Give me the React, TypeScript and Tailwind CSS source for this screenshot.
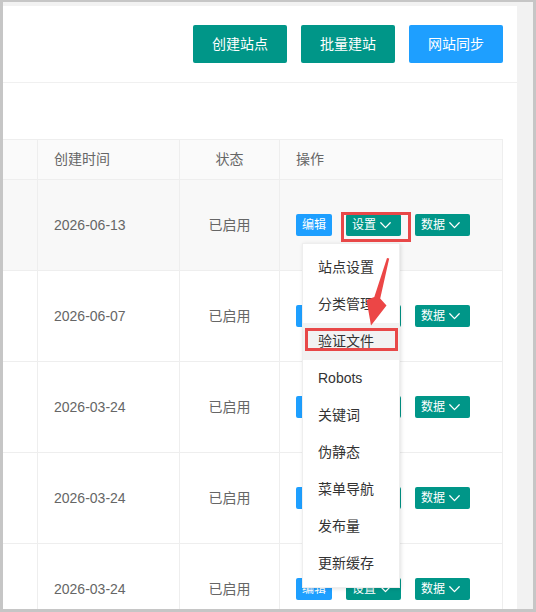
import React from 'react';

const rows = [
    { date: '2026-06-13', status: '已启用', active: true },
    { date: '2026-06-07', status: '已启用' },
    { date: '2026-03-24', status: '已启用' },
    { date: '2026-03-24', status: '已启用' },
    { date: '2026-03-24', status: '已启用' },
];

const menuItems = ['站点设置', '分类管理', '验证文件', 'Robots', '关键词', '伪静态', '菜单导航', '发布量', '更新缓存'];

function ChevronDown() {
    return (
        <svg width="11" height="7" viewBox="0 0 11 7" fill="none">
            <path d="M0.8 0.8 L5.5 5.6 L10.2 0.8" stroke="white" strokeWidth="1.3" strokeLinecap="round" strokeLinejoin="round" />
        </svg>
    );
}

function SmallButton({ label, color, dropdown }: { label: string; color: string; dropdown?: boolean }) {
    return (
        <button
            className={`h-[22px] rounded-[2px] text-[12px] text-white flex items-center ${color} ${dropdown ? 'w-[55px] pl-[6px] gap-[4px]' : 'w-[36px] justify-center'}`}
        >
            <span>{label}</span>
            {dropdown && <ChevronDown />}
        </button>
    );
}

export default function App() {
    return (
        <div className="w-[536px] h-[612px] overflow-hidden border-x-[3px] border-t-2 border-b-[3px] border-[#c6c6c6] bg-[#f2f2f2] font-['Liberation_Sans','Noto_Sans_CJK_SC',sans-serif]">
            <div className="relative mt-1 w-[514px] h-[700px] bg-white">
                {/* toolbar */}
                <div className="h-[77px] flex justify-end items-start gap-[14px] pt-[19px] pr-[14px] border-b border-[#f0f0f0]">
                    <button className="w-[94px] h-[38px] rounded-[2px] bg-[#009688] text-white text-[14px]">创建站点</button>
                    <button className="w-[94px] h-[38px] rounded-[2px] bg-[#009688] text-white text-[14px]">批量建站</button>
                    <button className="w-[94px] h-[38px] rounded-[2px] bg-[#1e9fff] text-white text-[14px]">网站同步</button>
                </div>

                {/* table */}
                <div className="pt-[56px] pr-[14px]">
                    <div className="border-t border-[#eeeeee] text-[14px] text-[#666]">
                        <div className="grid grid-cols-[35px_142px_100px_223px] h-[40px] bg-[#fafafa]">
                            <div className="border-r border-b border-[#eeeeee]" />
                            <div className="border-r border-b border-[#eeeeee] flex items-center pl-[16px]">创建时间</div>
                            <div className="border-r border-b border-[#eeeeee] flex items-center justify-center">状态</div>
                            <div className="border-r border-b border-[#eeeeee] flex items-center pl-[16px]">操作</div>
                        </div>
                        {rows.map((row, i) => (
                            <div key={i} className={`grid grid-cols-[35px_142px_100px_223px] h-[91px] ${row.active ? 'bg-[#f8f8f8]' : 'bg-white'}`}>
                                <div className="border-r border-b border-[#eeeeee]" />
                                <div className="border-r border-b border-[#eeeeee] flex items-center pl-[16px]">{row.date}</div>
                                <div className="border-r border-b border-[#eeeeee] flex items-center justify-center">{row.status}</div>
                                <div className="border-r border-b border-[#eeeeee] flex items-center pl-[16px] gap-[14px]">
                                    <SmallButton label="编辑" color="bg-[#1e9fff]" />
                                    <SmallButton label="设置" color="bg-[#009688]" dropdown />
                                    <SmallButton label="数据" color="bg-[#009688]" dropdown />
                                </div>
                            </div>
                        ))}
                    </div>
                </div>

                {/* dropdown menu */}
                <div className="absolute left-[299px] top-[237px] w-[98px] py-[5px] bg-white border border-[#eeeeee] shadow-[1px_1px_4px_rgba(0,0,0,0.12)] z-10">
                    {menuItems.map((item) => (
                        <div
                            key={item}
                            className={`h-[37px] flex items-center pl-[15px] text-[14px] text-[#333] ${item === '验证文件' ? 'bg-[#f2f2f2]' : ''}`}
                        >
                            {item}
                        </div>
                    ))}
                </div>

                {/* annotations */}
                <div className="absolute left-[338px] top-[206px] w-[70px] h-[30px] border-[3px] border-[#e84848] z-20" />
                <div className="absolute left-[302px] top-[322px] w-[93px] h-[23px] border-[3px] border-[#e84848] z-20" />
                <svg className="absolute left-[-3px] top-[-6px] z-20 pointer-events-none" width="536" height="612" viewBox="0 0 536 612">
                    <polygon
                        points="387,258 374.3,297 366.5,300 371,325.5 386.5,305.5 380.2,298.6 389.2,258.6"
                        fill="#ec4646"
                    />
                </svg>
            </div>
        </div>
    );
}
